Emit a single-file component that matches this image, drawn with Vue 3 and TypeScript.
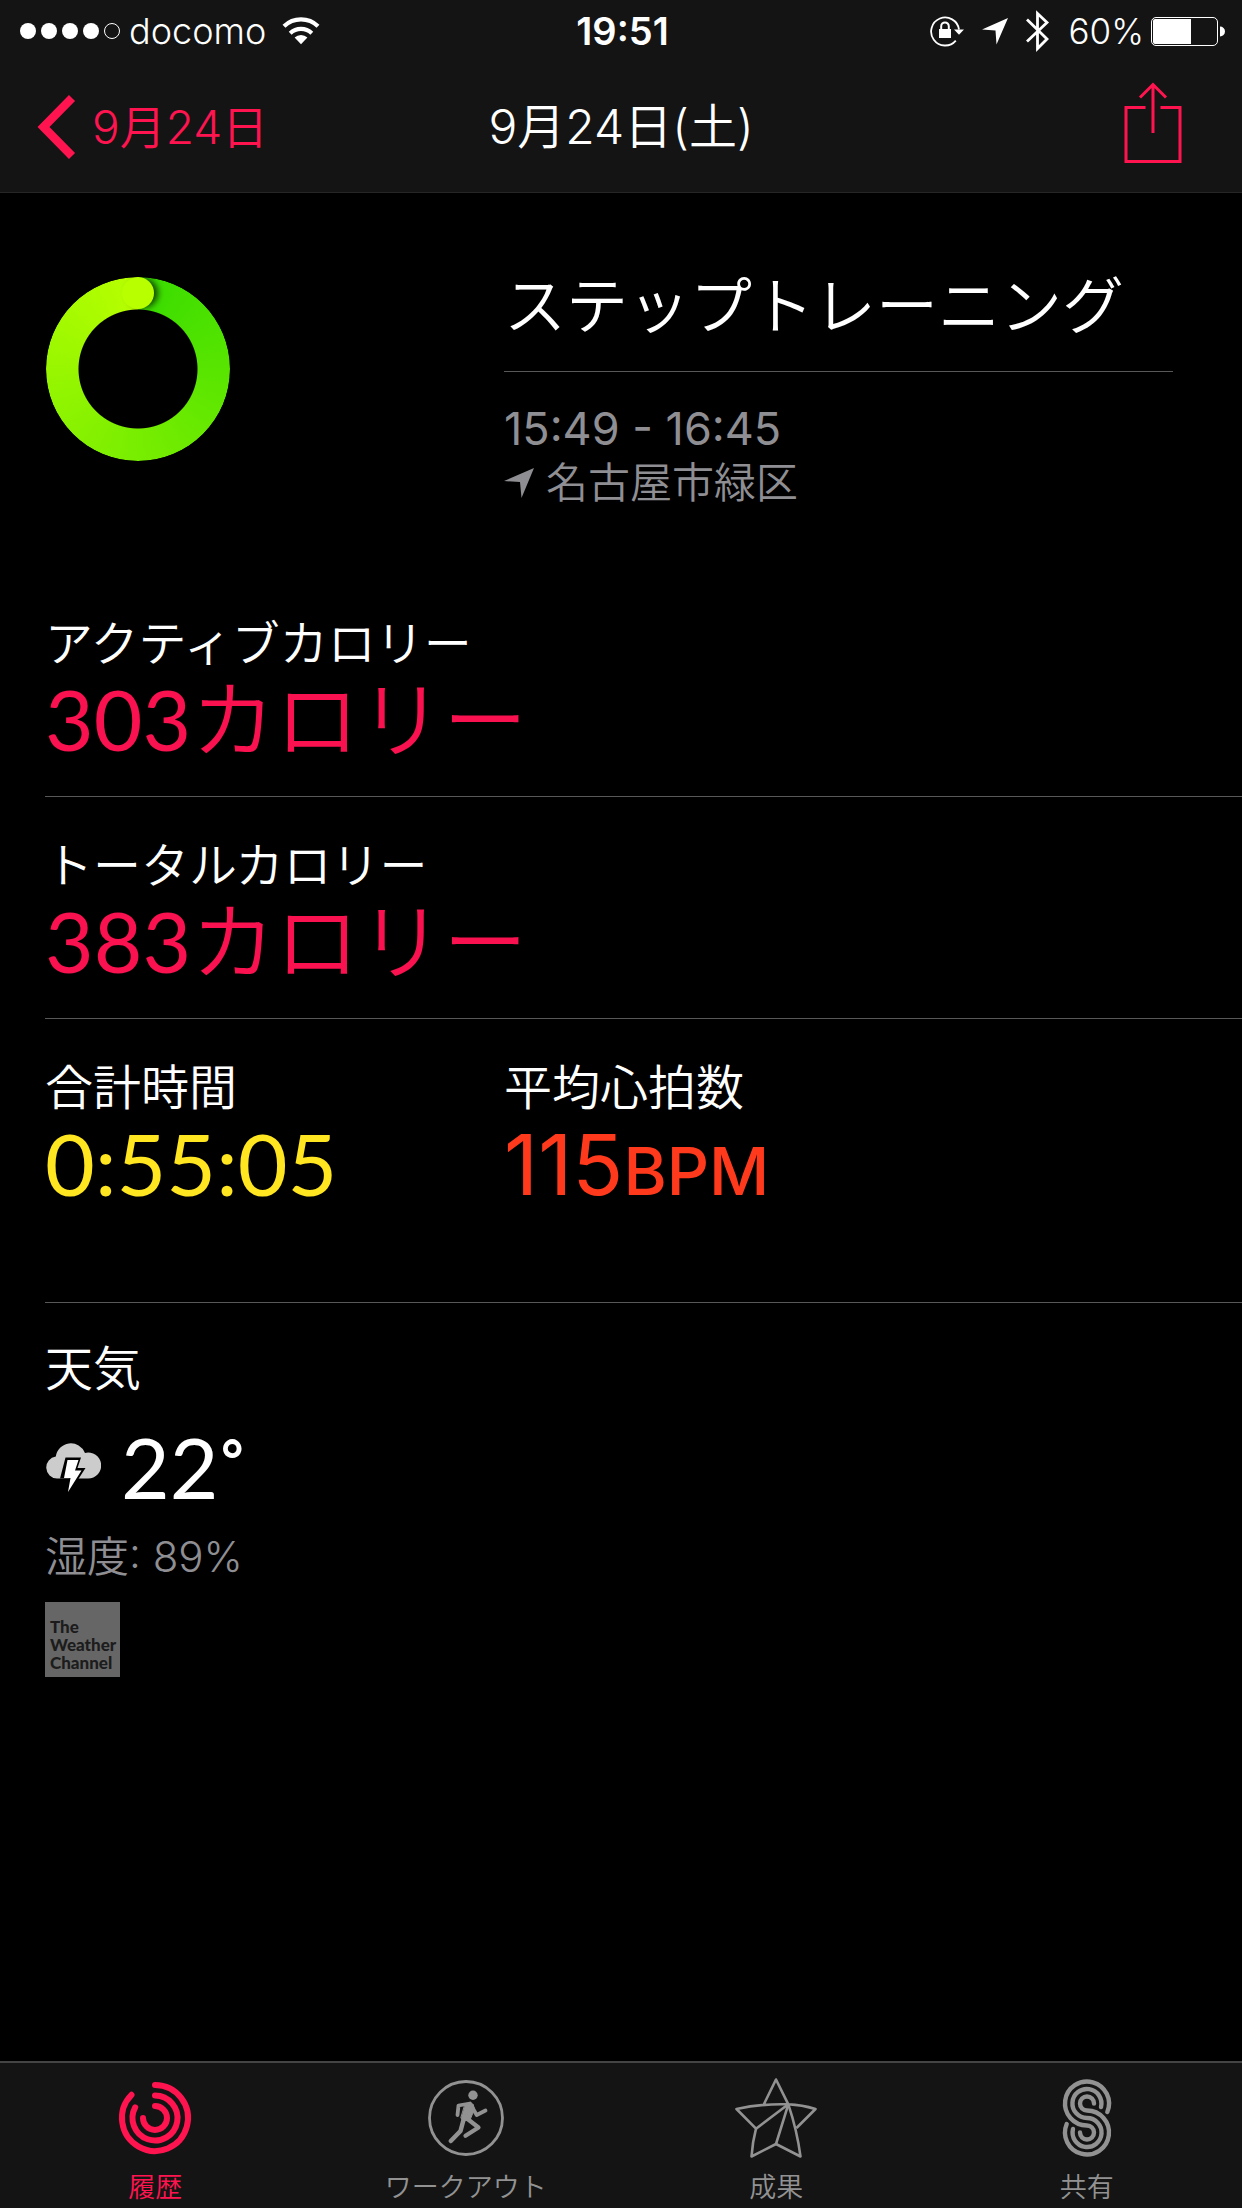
<script setup lang="ts">
interface Metric {
  label: string
  value: string
  unit?: string
  tone: 'move' | 'time' | 'heart'
}

const rows: { tall: boolean; metrics: Metric[] }[] = [
  { tall: false, metrics: [{ label: 'アクティブカロリー', value: '303', unit: 'カロリー', tone: 'move' }] },
  { tall: false, metrics: [{ label: 'トータルカロリー', value: '383', unit: 'カロリー', tone: 'move' }] },
  {
    tall: true,
    metrics: [
      { label: '合計時間', value: '0:55:05', tone: 'time' },
      { label: '平均心拍数', value: '115', unit: 'BPM', tone: 'heart' },
    ],
  },
]

const tabs = [
  { id: 'history', label: '履歴' },
  { id: 'workout', label: 'ワークアウト' },
  { id: 'awards', label: '成果' },
  { id: 'sharing', label: '共有' },
]
const current = 'history'
</script>

<template>
  <div class="screen">
    <header class="top">
      <div class="status">
        <div class="status-left">
          <svg width="102" height="18" viewBox="0 0 102 18" aria-hidden="true">
            <g fill="#fff">
              <circle cx="9" cy="9" r="8" /><circle cx="30" cy="9" r="8" />
              <circle cx="51" cy="9" r="8" /><circle cx="72" cy="9" r="8" />
            </g>
            <circle cx="93" cy="9" r="7.5" fill="none" stroke="#fff" />
          </svg>
          <span class="carrier">docomo</span>
          <svg width="38" height="28" viewBox="0 0 38 28" aria-hidden="true">
            <g fill="none" stroke="#fff" stroke-width="4.2">
              <path d="M2 9.3A24.5 24.5 0 0 1 36 9.3" />
              <path d="M8.2 16.2A15.8 15.8 0 0 1 29.8 16.2" />
            </g>
            <path d="M12.6 20.6A9.4 9.4 0 0 1 25.4 20.6L19 27.2Z" fill="#fff" />
          </svg>
        </div>
        <time class="clock">19:51</time>
        <div class="status-right">
          <svg width="36" height="32" viewBox="0 0 36 32" aria-hidden="true">
            <path d="M26.8 25.6A14 14 0 1 1 30 14.5" fill="none" stroke="#fff" stroke-width="1.8" />
            <path d="M25 14.6H35L30 19.8Z" fill="#fff" />
            <rect x="10" y="14" width="12" height="9" fill="#fff" />
            <path d="M12.2 14V11.2A3.8 3.8 0 0 1 19.8 11.2V14" fill="none" stroke="#fff" stroke-width="2" />
          </svg>
          <svg class="arrow" width="28" height="28" viewBox="0 0 28 28" aria-hidden="true">
            <path d="M27 1L15.5 27.5L14.5 13.5L1 12.5Z" fill="#fff" />
          </svg>
          <svg class="bluetooth" width="26" height="42" viewBox="0 0 26 42" aria-hidden="true">
            <path d="M2 9.5L22 29L12.5 38.5V3.5L22 12.5L2 31.5" fill="none" stroke="#fff" stroke-width="2.8" />
          </svg>
          <span class="percent">60%</span>
          <svg width="76" height="30" viewBox="0 0 76 30" aria-hidden="true">
            <rect x="1.5" y="1.5" width="66" height="28" rx="4.5" fill="none" stroke="#fff" />
            <path d="M5 3H41V28H5A2 2 0 0 1 3 26V5A2 2 0 0 1 5 3Z" fill="#fff" />
            <path d="M70 10.5A5 5 0 0 1 70 20.5Z" fill="#fff" />
          </svg>
        </div>
      </div>
      <div class="navbar">
        <button class="back" type="button">
          <svg width="42" height="66" viewBox="0 0 42 66" aria-hidden="true">
            <path d="M38 4L9.5 33L38 62" fill="none" stroke="currentColor" stroke-width="8.5" />
          </svg>
          <span>9月24日</span>
        </button>
        <h1>9月24日(土)</h1>
        <button class="share" type="button" aria-label="共有">
          <svg width="58" height="82" viewBox="0 0 58 82" aria-hidden="true">
            <g fill="none" stroke="currentColor" stroke-width="3">
              <path d="M21.5 25.5H2V79.5H56V25.5H36.5" />
              <path d="M29 51V3M16 15.5L29 2.5L42 15.5" />
            </g>
          </svg>
        </button>
      </div>
    </header>

    <main>
      <section class="summary">
        <div class="ring"><span class="cap"></span></div>
        <div class="info">
          <h2>ステップトレーニング</h2>
          <p class="span">15:49 - 16:45</p>
          <p class="place">
            <svg width="30" height="32" viewBox="0 0 30 32" aria-hidden="true">
              <path d="M30 1L17.5 31L16 15L0 14Z" fill="currentColor" />
            </svg>
            <span>名古屋市緑区</span>
          </p>
        </div>
      </section>

      <dl v-for="(row, i) in rows" :key="i" class="row" :class="{ tall: row.tall }">
        <div v-for="m in row.metrics" :key="m.label">
          <dt>{{ m.label }}</dt>
          <dd class="value" :class="m.tone">{{ m.value }}<span v-if="m.unit" class="unit">{{ m.unit }}</span></dd>
        </div>
      </dl>

      <section class="weather">
        <h3>天気</h3>
        <div class="temp">
          <svg width="56" height="54" viewBox="0 0 56 54" aria-hidden="true">
            <path d="M12 38.500A11 11 0 0 1 10.800 16.600A15.200 15.200 0 0 1 40 12.900A13 13 0 1 1 43 38.500Z" fill="#ccc" />
            <path d="M20.500 17.500H36L32.500 28H40.500L22.500 56L24.500 38.500H15Z" fill="#000" />
            <path d="M22.500 20H33.500L30 30.500H36.500L23 52L25.500 38H19Z" fill="#fff" />
          </svg>
          <span>22<span class="degree">°</span></span>
        </div>
        <p class="humidity">湿度: 89%</p>
        <a class="source" href="#">The<br />Weather<br />Channel</a>
      </section>
    </main>

    <nav class="tabs">
      <button v-for="t in tabs" :key="t.id" type="button" :class="{ active: t.id === current }">
        <svg width="84" height="84" viewBox="-42 -42 84 84" fill="none" stroke="currentColor" aria-hidden="true">
          <g v-if="t.id === 'history'" stroke-width="6" stroke-linecap="round">
            <path d="M0 -33A33 33 0 1 1 -23.500 -23.200" />
            <path d="M0 -22.500A22.500 22.500 0 1 1 -19.800 -10.700" />
            <path d="M0 -12A12 12 0 1 1 -12 0" />
          </g>
          <g v-else-if="t.id === 'workout'" stroke-linecap="round" stroke-linejoin="round">
            <circle r="36.500" stroke-width="2.800" />
            <circle cx="7" cy="-22.700" r="4.700" fill="currentColor" stroke="none" />
            <path d="M-8.500 -3L-7.500 -12.500L4 -14.500L10.700 -3L19.500 -7.500" stroke-width="3.800" />
            <path d="M-1 -13L7 -14L8.500 -9L4 2L-3 3L-5 0Z" fill="currentColor" stroke-width="1" />
            <path d="M-1 -1L12.500 9.500L-.5 17.800" stroke-width="4.200" />
            <path d="M-2 0L-5.500 13L-15.200 23" stroke-width="4.500" />
          </g>
          <g v-else-if="t.id === 'awards'" stroke-width="2.600" stroke-linejoin="round">
            <path d="M-12 -14L0 -38.500L12.300 -13.700Q21 12 24.500 38.500L0 26L-24.500 38.500Q-23.500 24 -20 10.700L-39.500 -9Q-14 -14.500 12.300 -13.700Q26 -13.200 39.500 -9L20.500 10" />
            <path d="M-20 10.700L12.300 -13.700L0 26" />
          </g>
          <g v-else stroke-width="4.400" stroke-linecap="round">
            <path d="M20.300 -6A22 22 0 1 0 0 7.500A7 7 0 1 1 -7 14.500" />
            <path d="M14 -11A14.500 14.500 0 1 0 0 0A14.500 14.500 0 1 1 -14 11" />
            <path d="M7 -14.500A7 7 0 1 0 0 -7.500A22 22 0 1 1 -20.300 6" />
          </g>
        </svg>
        <span>{{ t.label }}</span>
      </button>
    </nav>
  </div>
</template>

<style>
body {
  background: #000;
}
</style>

<style scoped>
.screen {
  display: flex;
  flex-direction: column;
  min-height: 100vh;
  background: #000;
  color: #fff;
  font-family: Inter, 'Noto Sans CJK JP', sans-serif;
  font-weight: 350;
}
h1, h2, h3, p, dl, dt, dd {
  margin: 0;
  font-weight: inherit;
}
svg {
  display: block;
  flex: none;
}
button {
  margin: 0;
  padding: 0;
  border: 0;
  background: none;
  color: inherit;
  font: inherit;
}
.top {
  background: #141414;
  border-bottom: 1px solid #262628;
}
.status {
  display: grid;
  grid-template-columns: 1fr auto 1fr;
  align-items: center;
  height: 61px;
  padding: 0 16px 0 19px;
  font-size: 36px;
  line-height: 44px;
}
.status-left,
.status-right {
  display: flex;
  align-items: center;
}
.carrier {
  margin: 0 16px 0 8px;
}
.clock {
  font-size: 38px;
  font-weight: 600;
}
.status-right {
  justify-content: flex-end;
}
.arrow {
  margin-left: 16px;
}
.bluetooth {
  margin: 0 18px 0 16px;
}
.percent {
  margin-right: 6px;
  font-size: 35px;
}
.navbar {
  display: grid;
  grid-template-columns: 1fr auto 1fr;
  align-items: center;
  height: 131px;
}
.back {
  display: flex;
  align-items: center;
  gap: 16px;
  margin-left: 34px;
  color: #ff1450;
  font-size: 46px;
  line-height: 60px;
}
.navbar h1 {
  font-size: 48px;
  line-height: 60px;
}
.share {
  justify-self: end;
  margin-right: 60px;
  color: #ff1450;
}
.share svg {
  margin-bottom: 8px;
}
main {
  flex: 1;
  padding-left: 45px;
}
.summary {
  display: grid;
  grid-template-columns: 459px minmax(0, 1fr);
  height: 382px;
  padding: 84px 69px 0 0;
  box-sizing: border-box;
}
.ring {
  position: relative;
  width: 184px;
  height: 184px;
  margin-left: 1px;
  border-radius: 50%;
  background: conic-gradient(#38dc00, #b8ff00);
  -webkit-mask: radial-gradient(circle, transparent 59px, #000 60px);
  mask: radial-gradient(circle, transparent 59px, #000 60px);
}
.cap {
  position: absolute;
  top: 0;
  left: 76px;
  width: 32px;
  height: 32px;
  border-radius: 50%;
  background: #b8ff00;
  box-shadow: 5px 0 6px -1px rgba(0, 0, 0, 0.7);
}
.info h2 {
  padding-bottom: 34px;
  border-bottom: 1px solid #58585a;
  font-size: 62px;
  line-height: 60px;
}
.span,
.place,
.humidity {
  color: #8e8e93;
  font-size: 42px;
  line-height: 54px;
}
.span {
  margin-top: 30px;
  font-size: 45px;
  font-weight: 400;
}
.place {
  display: flex;
  align-items: center;
  gap: 12px;
}
.row {
  display: grid;
  grid-template-columns: 459px minmax(0, 1fr);
  height: 222px;
  padding-top: 41px;
  border-bottom: 1px solid #58585a;
  box-sizing: border-box;
}
.row.tall {
  height: 284px;
}
dt,
.weather h3 {
  font-size: 48px;
  line-height: 56px;
  white-space: nowrap;
}
.value {
  font-family: Lato, 'Noto Sans CJK JP', sans-serif;
  font-size: 84px;
  line-height: 94px;
  font-weight: 400;
  white-space: nowrap;
}
.move {
  color: #fa114f;
}
.move .unit {
  display: inline-block;
  font-weight: 350;
}
.time {
  color: #ffe620;
  font-size: 86px;
}
.heart {
  color: #ff3a1c;
  font-family: Inter, sans-serif;
  line-height: 98px;
}
.heart .unit {
  font-size: 66px;
  font-weight: 500;
}
.weather {
  padding: 38px 0 40px;
}
.temp {
  display: flex;
  align-items: center;
  gap: 20px;
  margin-top: 20px;
  font-family: Lato, sans-serif;
  font-size: 84px;
  line-height: 100px;
  font-weight: 400;
}
.degree {
  font-family: Roboto, sans-serif;
  font-size: 72px;
  font-weight: 500;
  line-height: 0;
  vertical-align: 8px;
}
.humidity {
  margin-top: 13px;
}
.source {
  display: flex;
  align-items: flex-end;
  width: 75px;
  height: 75px;
  margin-top: 18px;
  padding: 0 5px 5px;
  box-sizing: border-box;
  background: #666;
  color: #1c1c1c;
  font: 900 17px/18px Lato, sans-serif;
  text-decoration: none;
}
.tabs {
  display: grid;
  grid-template-columns: repeat(4, 1fr);
  height: 147px;
  border-top: 2px solid #444;
  background: #141414;
  box-sizing: border-box;
  color: #929292;
  font-size: 27px;
  line-height: 36px;
}
.tabs button {
  display: flex;
  flex-direction: column;
  align-items: center;
  padding-top: 13px;
  gap: 10px;
}
.tabs .active {
  color: #ff1450;
}
</style>
